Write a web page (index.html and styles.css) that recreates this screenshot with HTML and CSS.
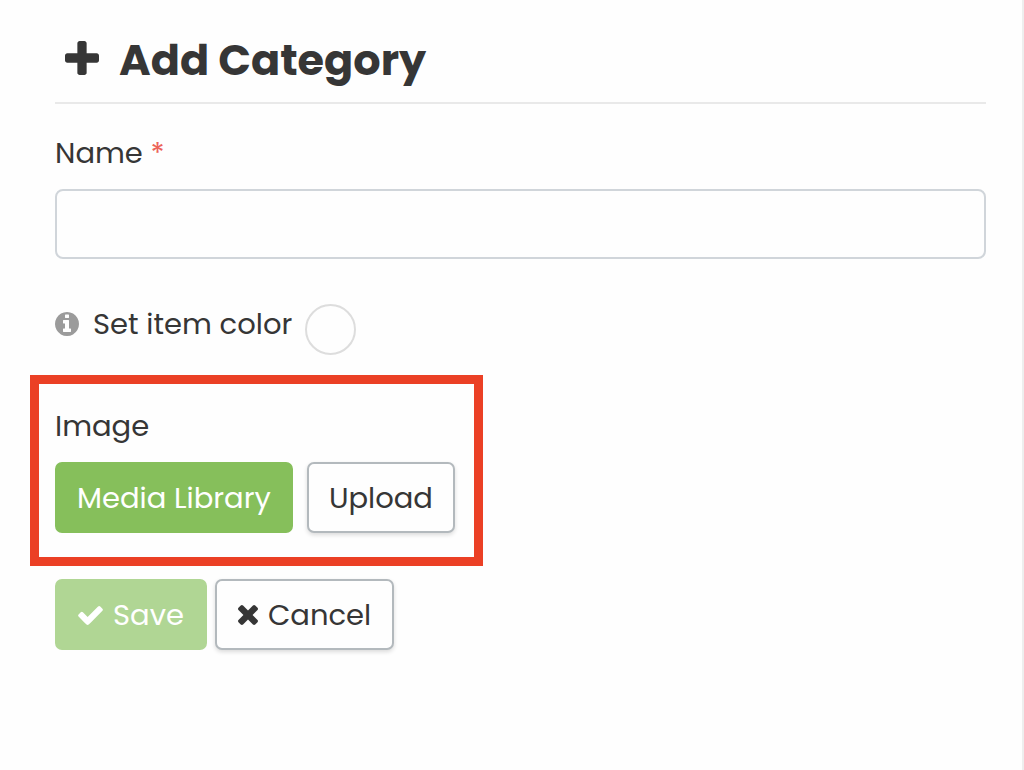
FILE: index.html
```html
<!DOCTYPE html>
<html lang="en">
<head>
<meta charset="utf-8">
<meta name="viewport" content="width=device-width, initial-scale=1">
<title>Add Category</title>
<link rel="stylesheet" href="styles.css">
</head>
<body>
<main class="panel">
  <h1 class="title">
    <svg class="icon-plus" viewBox="192 192 1408 1408" aria-hidden="true"><path d="M1600 800v192q0 40-28 68t-68 28h-416v416q0 40-28 68t-68 28h-192q-40 0-68-28t-28-68v-416h-416q-40 0-68-28t-28-68v-192q0-40 28-68t68-28h416v-416q0-40 28-68t68-28h192q40 0 68 28t28 68v416h416q40 0 68 28t28 68z"/></svg>
    <span>Add Category</span>
  </h1>
  <form class="form">
    <label class="label" for="name">Name <span class="required">*</span></label>
    <input class="field" id="name" type="text" required>
    <div class="color-row">
      <svg class="icon-info" viewBox="128 128 1536 1536" aria-hidden="true"><path d="M1152 1376v-160q0-14-9-23t-23-9h-96v-512q0-14-9-23t-23-9h-320q-14 0-23 9t-9 23v160q0 14 9 23t23 9h96v320h-96q-14 0-23 9t-9 23v160q0 14 9 23t23 9h448q14 0 23-9t9-23zm-128-896v-160q0-14-9-23t-23-9h-192q-14 0-23 9t-9 23v160q0 14 9 23t23 9h192q14 0 23-9t9-23zm640 416q0 209-103 385.500t-279.500 279.500-385.500 103-385.500-103-279.500-279.500-103-385.500 103-385.500 279.500-279.500 385.500-103 385.500 103 279.500 279.500 103 385.500z"/></svg>
      <span class="color-label" id="color-label">Set item color</span>
      <button class="swatch" type="button" aria-labelledby="color-label"></button>
    </div>
    <section class="highlight">
      <h2 class="label">Image</h2>
      <div class="image-actions">
        <button class="button primary" type="button">Media Library</button>
        <button class="button" type="button">Upload</button>
      </div>
    </section>
    <div class="actions">
      <button class="button primary" type="submit" disabled>
        <svg class="icon-check" viewBox="121 270 1550 1252" aria-hidden="true"><path d="M1671 566q0 40-28 68l-724 724-136 136q-28 28-68 28t-68-28l-136-136-362-362q-28-28-28-68t28-68l136-136q28-28 68-28t68 28l294 295 656-657q28-28 68-28t68 28l136 136q28 28 28 68z"/></svg>
        <span>Save</span>
      </button>
      <button class="button" type="button">
        <svg class="icon-times" viewBox="302 366 1188 1188" aria-hidden="true"><path d="M1490 1322q0 40-28 68l-136 136q-28 28-68 28t-68-28l-294-294-294 294q-28 28-68 28t-68-28l-136-136q-28-28-28-68t28-68l294-294-294-294q-28-28-28-68t28-68l136-136q28-28 68-28t68 28l294 294 294-294q28-28 68-28t68 28l136 136q28 28 28 68t-28 68l-294 294 294 294q28 28 28 68z"/></svg>
        <span>Cancel</span>
      </button>
    </div>
  </form>
</main>
</body>
</html>
```
FILE: styles.css
```css
* {
  box-sizing: border-box;
}

body {
  margin: 0;
  background: #fefefe;
  color: #363636;
  font-family: Poppins, Inter, "Open Sans", sans-serif;
  font-size: 29px;
  line-height: 44px;
}

svg {
  flex: none;
  fill: currentColor;
}

.panel {
  min-height: 100vh;
  padding: 28px 36px 28px 55px;
  border-right: 2px solid #eeeeee;
}

.title {
  display: flex;
  align-items: center;
  gap: 20px;
  margin: 0;
  padding: 0 10px 10px;
  border-bottom: 2px solid #e9e9e9;
  font-size: 43px;
  font-weight: 700;
  line-height: 64px;
}

.icon-plus {
  width: 34px;
  height: 34px;
  margin-bottom: 4px;
}

.form {
  display: flex;
  flex-direction: column;
  align-items: flex-start;
  padding-top: 27px;
}

.label {
  margin: 0;
  font-size: 29px;
  font-weight: 400;
}

.required {
  color: #ec6459;
}

.field {
  width: 100%;
  height: 70px;
  margin-top: 14px;
  padding: 0 22px;
  border: 2px solid #d0d5da;
  border-radius: 8px;
  background: #fefefe;
  color: inherit;
  font: inherit;
}

.color-row {
  display: flex;
  align-items: flex-start;
  margin-top: 45px;
}

.icon-info {
  width: 24px;
  height: 24px;
  margin: 8px 14px 0 0;
  color: #9b9b9b;
}

.color-label {
  line-height: 40px;
}

.swatch {
  width: 51px;
  height: 51px;
  margin-left: 13px;
  border: 2px solid #dddddd;
  border-radius: 50%;
  background: #fefefe;
}

.highlight {
  margin: 20px 0 0 -25px;
  padding: 20px 19px 24px 16px;
  border: 9px solid #eb4025;
}

.image-actions {
  display: flex;
  gap: 14px;
  margin-top: 14px;
}

.actions {
  display: flex;
  gap: 8px;
  margin-top: 13px;
}

.button {
  display: flex;
  align-items: center;
  justify-content: center;
  gap: 10px;
  height: 71px;
  padding: 0 20px;
  border: 2px solid #b3b9bd;
  border-radius: 7px;
  background: #fefefe;
  box-shadow: 0 2px 4px rgba(0, 0, 0, 0.14);
  color: inherit;
  font: inherit;
  white-space: nowrap;
}

.actions .button {
  padding: 0 21px;
}

.primary {
  border-color: #86bf5b;
  background: #86bf5b;
  box-shadow: none;
  color: #ffffff;
}

.primary:disabled {
  border-color: #b0d694;
  background: #b0d694;
}

.icon-check {
  width: 25px;
  height: 20px;
}

.icon-times {
  width: 20px;
  height: 20px;
}
```
